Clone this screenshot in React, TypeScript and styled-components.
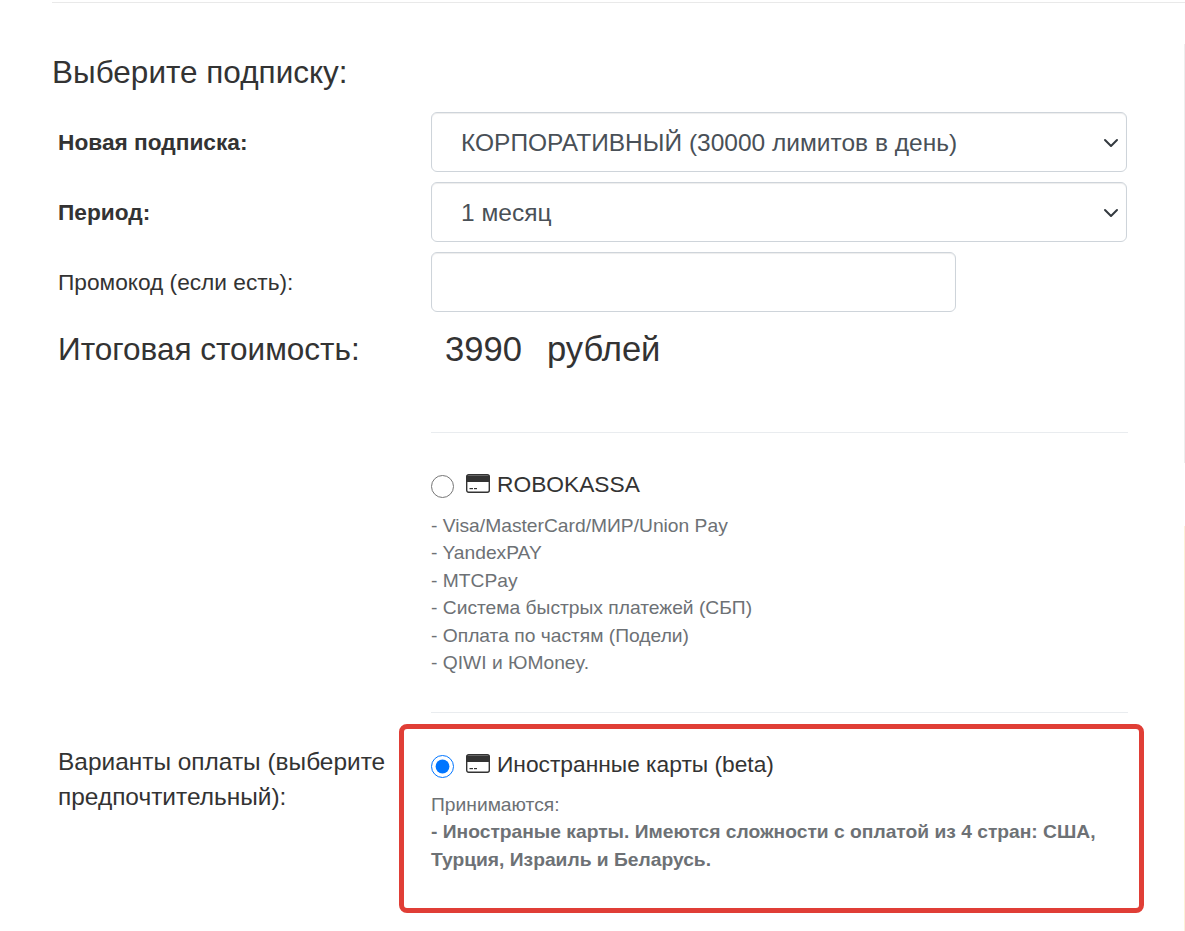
import { createGlobalStyle } from 'styled-components'
import styled from 'styled-components'

const GlobalStyle = createGlobalStyle`
  html, body {
    margin: 0;
    padding: 0;
    background: #fff;
  }
  body {
    font-family: 'Liberation Sans', Arial, sans-serif;
    color: #333;
  }
  * {
    box-sizing: border-box;
  }
`

const CardIcon = () => (
  <CardSvg viewBox="0 0 24 19" aria-hidden="true">
    <rect x="0.7" y="0.7" width="22.6" height="17.6" rx="2" fill="#fff" stroke="#333" strokeWidth="1.4" />
    <rect x="0.7" y="1.5" width="22.6" height="6.5" fill="#333" />
    <rect x="3.5" y="14" width="3.5" height="1.2" fill="#333" />
    <rect x="8" y="14" width="3" height="1.2" fill="#333" />
  </CardSvg>
)

const Chevron = () => (
  <ChevronSvg viewBox="0 0 16 16" aria-hidden="true">
    <path d="M2 5l6 6 6-6" fill="none" stroke="#343a40" strokeWidth="2" strokeLinecap="round" strokeLinejoin="round" />
  </ChevronSvg>
)

export default function App() {
  return (
    <Page>
      <GlobalStyle />
      <TopRule />
      <Heading>Выберите подписку:</Heading>
      <FormRow>
        <Label $bold>Новая подписка:</Label>
        <SelectWrap>
          <Select defaultValue="corp">
            <option value="corp">КОРПОРАТИВНЫЙ (30000 лимитов в день)</option>
          </Select>
          <Chevron />
        </SelectWrap>
      </FormRow>
      <FormRow>
        <Label $bold>Период:</Label>
        <SelectWrap>
          <Select defaultValue="1">
            <option value="1">1 месяц</option>
          </Select>
          <Chevron />
        </SelectWrap>
      </FormRow>
      <FormRow>
        <Label>Промокод (если есть):</Label>
        <PromoInput />
      </FormRow>
      <TotalRow>
        <TotalLabel>Итоговая стоимость:</TotalLabel>
        <TotalValue>
          <span>3990</span>
          <span>рублей</span>
        </TotalValue>
      </TotalRow>
      <PaymentRow>
        <PaymentLabel>Варианты оплаты (выберите предпочтительный):</PaymentLabel>
        <PaymentOptions>
          <Divider />
          <Option>
            <OptionTitle>
              <Radio type="radio" name="pay" />
              <CardIcon />
              ROBOKASSA
            </OptionTitle>
            <OptionText>
              - Visa/MasterCard/МИР/Union Pay
              <br />- YandexPAY
              <br />- MTCPay
              <br />- Система быстрых платежей (СБП)
              <br />- Оплата по частям (Подели)
              <br />- QIWI и ЮMoney.
            </OptionText>
          </Option>
          <Divider />
          <Option>
            <OptionTitle>
              <Radio type="radio" name="pay" defaultChecked />
              <CardIcon />
              Иностранные карты (beta)
            </OptionTitle>
            <OptionText $tight>
              Принимаются:
              <br />
              <b>- Иностраные карты. Имеются сложности с оплатой из 4 стран: США, Турция, Израиль и Беларусь.</b>
            </OptionText>
            <Highlight />
          </Option>
        </PaymentOptions>
      </PaymentRow>
      <EdgeLine $top={44} $height={419} $color="#eeeeee" />
      <EdgeLine $top={526} $height={405} $color="#fdf1d8" />
    </Page>
  )
}

const Page = styled.div`
  width: 1185px;
  height: 931px;
  overflow: hidden;
  padding: 2px 58px 0 52px;
  position: relative;
`
const TopRule = styled.div`
  height: 1px;
  background: #e9e9e9;
  margin-right: -58px;
`
const Heading = styled.h2`
  margin: 47px 0 18px;
  font-size: 31.5px;
  line-height: 44px;
  font-weight: 400;
  color: #333;
`
const FormRow = styled.div`
  display: grid;
  grid-template-columns: 379px 696px;
  align-items: center;
  height: 60px;
  margin-bottom: 10px;
  padding-left: 6px;
`
const Label = styled.label<{ $bold?: boolean }>`
  font-size: 22.7px;
  font-weight: ${(p) => (p.$bold ? 700 : 400)};
  color: #333;
  white-space: nowrap;
`
const SelectWrap = styled.div`
  position: relative;
  height: 60px;
  width: 696px;
  margin-left: -6px;
`
const Select = styled.select`
  appearance: none;
  width: 100%;
  height: 100%;
  padding: 0 40px 0 29px;
  font-family: inherit;
  font-size: 24.5px;
  color: #495057;
  background: #fff;
  border: 1px solid #ced4da;
  border-radius: 6px;
  box-shadow: inset 0 1px 1px rgba(0, 0, 0, 0.075);
`
const ChevronSvg = styled.svg`
  position: absolute;
  right: 8px;
  top: 23px;
  width: 16px;
  height: 16px;
`
const PromoInput = styled.input`
  width: 525px;
  height: 60px;
  margin-left: -6px;
  border: 1px solid #ced4da;
  border-radius: 6px;
  background: #fff;
  box-shadow: inset 0 1px 1px rgba(0, 0, 0, 0.075);
`
const TotalRow = styled.div`
  display: grid;
  grid-template-columns: 387px auto;
  padding-left: 6px;
  margin-top: 15px;
`
const TotalLabel = styled.div`
  font-size: 31.5px;
  line-height: 44px;
`
const TotalValue = styled.div`
  display: flex;
  gap: 25px;
  font-size: 34.6px;
  line-height: 44px;
`
const PaymentRow = styled.div`
  display: grid;
  grid-template-columns: 379px 697px;
  padding-left: 6px;
  margin-top: 61px;
`
const PaymentLabel = styled.div`
  font-size: 24.45px;
  line-height: 35px;
  align-self: end;
  margin-bottom: 117px;
`
const PaymentOptions = styled.div`
  margin-left: -6px;
  width: 697px;
`
const Divider = styled.div`
  height: 1px;
  background: #e9ecef;
`
const Option = styled.div`
  position: relative;
  padding-top: 34px;
  height: 279px;
  &:last-child {
    height: 218px;
  }
`
const OptionTitle = styled.label`
  display: flex;
  align-items: center;
  font-size: 22.75px;
  line-height: 34px;
  color: #333;
`
const Radio = styled.input`
  width: 23px;
  height: 23px;
  margin: 4px 12px 0 0;
`
const CardSvg = styled.svg`
  width: 24px;
  height: 19px;
  margin: -2px 7px 0 0;
`
const OptionText = styled.div<{ $tight?: boolean }>`
  margin-top: ${(p) => (p.$tight ? 10 : 11)}px;
  font-size: 19.24px;
  line-height: 27.4px;
  color: #6d7175;
`
const Highlight = styled.div`
  position: absolute;
  left: -32px;
  top: 11px;
  width: 745px;
  height: 189px;
  border: 5px solid #e03e36;
  border-radius: 8px;
  pointer-events: none;
`
const EdgeLine = styled.div<{ $top: number; $height: number; $color: string }>`
  position: absolute;
  right: 0;
  top: ${(p) => p.$top}px;
  width: 1px;
  height: ${(p) => p.$height}px;
  background: ${(p) => p.$color};
`
